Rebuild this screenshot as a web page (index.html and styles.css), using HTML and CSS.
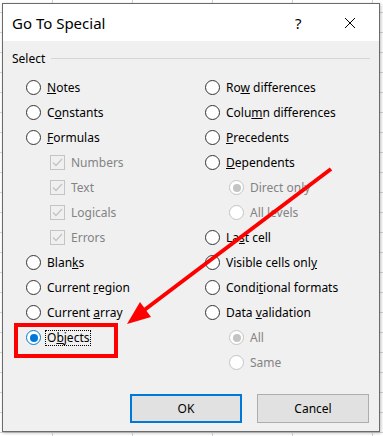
FILE: index.html
```html
<!DOCTYPE html>
<html>
<head>
  <meta charset="UTF-8">
  <title>Go To Special</title>
  <link rel="stylesheet" href="styles.css">
</head>
<body>
  <div class="dialog">
    <div class="titlebar">
      <span class="title">Go To Special</span>
      <span class="help">?</span>
      <span class="close">
        <svg width="12" height="12" viewBox="0 0 12 12"><path d="M1 1 L11 11 M11 1 L1 11" stroke="#000" stroke-width="1" fill="none"/></svg>
      </span>
    </div>

    <div class="content">
      <div class="group-head">
        <span>Select</span>
        <span class="rule"></span>
      </div>

      <div class="options">
        <div class="col">
          <div class="opt"><span class="radio"></span><span><u>N</u>otes</span></div>
          <div class="opt"><span class="radio"></span><span>C<u>o</u>nstants</span></div>
          <div class="opt"><span class="radio"></span><span><u>F</u>ormulas</span></div>
          <div class="opt sub disabled"><span class="check"><svg width="11" height="9" viewBox="0 0 11 9"><path d="M1 4.5 L4 7.5 L10 1" stroke="#c4c4c4" stroke-width="1.3" fill="none"/></svg></span><span>Numbers</span></div>
          <div class="opt sub disabled"><span class="check"><svg width="11" height="9" viewBox="0 0 11 9"><path d="M1 4.5 L4 7.5 L10 1" stroke="#c4c4c4" stroke-width="1.3" fill="none"/></svg></span><span>Text</span></div>
          <div class="opt sub disabled"><span class="check"><svg width="11" height="9" viewBox="0 0 11 9"><path d="M1 4.5 L4 7.5 L10 1" stroke="#c4c4c4" stroke-width="1.3" fill="none"/></svg></span><span>Logicals</span></div>
          <div class="opt sub disabled"><span class="check"><svg width="11" height="9" viewBox="0 0 11 9"><path d="M1 4.5 L4 7.5 L10 1" stroke="#c4c4c4" stroke-width="1.3" fill="none"/></svg></span><span>Errors</span></div>
          <div class="opt"><span class="radio"></span><span>Blan<u>k</u>s</span></div>
          <div class="opt"><span class="radio"></span><span>Current <u>r</u>egion</span></div>
          <div class="opt"><span class="radio"></span><span>Current <u>a</u>rray</span></div>
          <div class="opt"><span class="radio on"></span><span class="focus">O<u>b</u>jects</span></div>
        </div>
        <div class="col">
          <div class="opt"><span class="radio"></span><span>Ro<u>w</u> differences</span></div>
          <div class="opt"><span class="radio"></span><span>Colu<u>m</u>n differences</span></div>
          <div class="opt"><span class="radio"></span><span><u>P</u>recedents</span></div>
          <div class="opt"><span class="radio"></span><span><u>D</u>ependents</span></div>
          <div class="opt sub disabled"><span class="radio on"></span><span>Direct only</span></div>
          <div class="opt sub disabled"><span class="radio"></span><span>All levels</span></div>
          <div class="opt"><span class="radio"></span><span>La<u>s</u>t cell</span></div>
          <div class="opt"><span class="radio"></span><span>Visible cells onl<u>y</u></span></div>
          <div class="opt"><span class="radio"></span><span>Condi<u>t</u>ional formats</span></div>
          <div class="opt"><span class="radio"></span><span>Data <u>v</u>alidation</span></div>
          <div class="opt sub disabled"><span class="radio on"></span><span>All</span></div>
          <div class="opt sub disabled"><span class="radio"></span><span>Same</span></div>
        </div>
      </div>

      <div class="buttons">
        <button class="btn default">OK</button>
        <button class="btn">Cancel</button>
      </div>
    </div>
  </div>

  <!-- red annotation drawn over the dialog -->
  <svg class="markup" width="383" height="436" viewBox="0 0 383 436">
    <rect x="16" y="325" width="100" height="31" fill="none" stroke="#ff0000" stroke-width="4"/>
    <path d="M331 169 L143 311" stroke="#ff0000" stroke-width="4" fill="none"/>
    <path d="M127 324 L140 302 L151 317 Z" fill="#ff0000"/>
  </svg>
</body>
</html>
```

FILE: styles.css
```css
* {
  margin: 0;
  padding: 0;
  box-sizing: border-box;
}

body {
  width: 383px;
  height: 436px;
  overflow: hidden;
  position: relative;
  font-family: 'Noto Sans', 'Open Sans', sans-serif;
  background-color: #fff;
  background-image:
    linear-gradient(to right, transparent 52px, #d4d4d4 52px, #d4d4d4 53px, transparent 53px),
    linear-gradient(to bottom, transparent 12px, #d4d4d4 12px, #d4d4d4 13px, transparent 13px);
  background-size: 80px 100%, 100% 20px;
  padding: 3px 0 0 2px;
}

.dialog {
  width: 378px;
  height: 429px;
  border: 1px solid #6b6b6b;
  background-color: #f0f0f0;
  box-shadow: 1px 1px 3px rgba(0, 0, 0, 0.25);
  display: flex;
  flex-direction: column;
}

.titlebar {
  height: 37px;
  background-color: #fff;
  display: flex;
  align-items: center;
  padding-left: 9px;
  font-size: 15px;
  color: #000;
}

.title {
  flex: 1;
}

.help {
  width: 12px;
  font-size: 15px;
  margin-right: 37px;
}

.close {
  display: flex;
  margin-right: 23px;
}

.content {
  flex: 1;
  padding: 9px 9px 0 9px;
  font-size: 12px;
  color: #000;
  display: flex;
  flex-direction: column;
}

.group-head {
  display: flex;
  align-items: center;
  height: 17px;
  gap: 6px;
}

.rule {
  flex: 1;
  height: 1px;
  background-color: #d5d5d5;
}

.options {
  display: grid;
  grid-template-columns: 179px 1fr;
  padding-left: 14px;
  margin-top: 8px;
}

.opt {
  height: 25px;
  display: flex;
  align-items: center;
  white-space: nowrap;
}

.opt.sub {
  padding-left: 24px;
}

.opt.disabled {
  color: #838383;
}

.radio {
  width: 15px;
  height: 15px;
  border: 1px solid #333;
  border-radius: 50%;
  background-color: #fff;
  margin-right: 6px;
  display: flex;
  align-items: center;
  justify-content: center;
  flex: none;
}

.radio.on::after {
  content: "";
  width: 8px;
  height: 8px;
  border-radius: 50%;
  background-color: #333;
}

.opt:not(.disabled) .radio.on {
  border-color: #0078d7;
}

.opt:not(.disabled) .radio.on::after {
  background-color: #0078d7;
}

.disabled .radio {
  border-color: #c4c4c4;
}

.disabled .radio.on::after {
  background-color: #c4c4c4;
}

.check {
  width: 15px;
  height: 15px;
  border: 1px solid #c4c4c4;
  margin-right: 6px;
  display: flex;
  align-items: center;
  justify-content: center;
  flex: none;
}

.focus {
  border: 1px dotted #000;
  padding: 0 1px;
  margin-left: -2px;
  line-height: 14px;
}

.buttons {
  display: flex;
  justify-content: flex-end;
  gap: 15px;
  margin-top: auto;
  margin-bottom: 8px;
  padding-right: 1px;
}

.btn {
  width: 112px;
  height: 29px;
  font-family: inherit;
  font-size: 12px;
  color: #000;
  background-color: #e1e1e1;
  border: 1px solid #adadad;
}

.btn.default {
  border: 2px solid #0078d7;
}

.markup {
  position: absolute;
  left: 0;
  top: 0;
}
```
